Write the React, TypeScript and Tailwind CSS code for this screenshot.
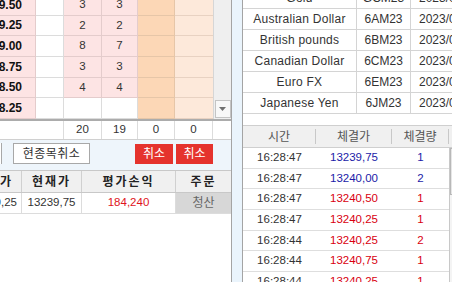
const book = [
  { price: '13239.50', a: '3', b: '3' },
  { price: '13239.25', a: '2', b: '2' },
  { price: '13239.00', a: '8', b: '7' },
  { price: '13238.75', a: '3', b: '3' },
  { price: '13238.50', a: '4', b: '4' },
  { price: '13238.25', a: '', b: '' },
];

const futures = [
  { name: 'Gold', code: 'GCM23' },
  { name: 'Australian Dollar', code: '6AM23' },
  { name: 'British pounds', code: '6BM23' },
  { name: 'Canadian Dollar', code: '6CM23' },
  { name: 'Euro FX', code: '6EM23' },
  { name: 'Japanese Yen', code: '6JM23' },
];

const trades = [
  { time: '16:28:47', price: '13239,75', qty: '1', up: false },
  { time: '16:28:47', price: '13240,00', qty: '2', up: false },
  { time: '16:28:47', price: '13240,50', qty: '1', up: true },
  { time: '16:28:47', price: '13240,25', qty: '1', up: true },
  { time: '16:28:44', price: '13240,25', qty: '2', up: true },
  { time: '16:28:44', price: '13240,75', qty: '1', up: true },
  { time: '16:28:44', price: '13240,25', qty: '1', up: true },
];

const OrderBook = () => (
  <div className="h-[140px] shrink-0 bg-white">
    <div className="flex h-[119px]">
      <div className="w-[213px] overflow-hidden">
        <div className="-mt-[5px]">
          {book.map((r, i) => {
            const filled = r.a !== '';
            return (
              <div key={i} className="flex h-[20.67px] text-[11.5px] text-[#333]">
                <div className="w-[36px] shrink-0 overflow-hidden bg-[#fde4e4] border-r border-b border-[#e4cccc] flex items-center justify-end pr-[13px] font-bold text-[12px] text-[#111] whitespace-nowrap">
                  {r.price}
                </div>
                <div className="w-[28px] shrink-0 bg-white border-r border-b border-[#dcdcdc]" />
                <div className={`w-[38px] shrink-0 border-r border-b flex items-center justify-center ${filled ? 'bg-[#fde4e4] border-[#e4cccc]' : 'bg-white border-[#dcdcdc]'}`}>
                  {r.a}
                </div>
                <div className={`w-[36px] shrink-0 border-r border-b flex items-center justify-center ${filled ? 'bg-[#fde4e4] border-[#e4cccc]' : 'bg-white border-[#dcdcdc]'}`}>
                  {r.b}
                </div>
                <div className="w-[37px] shrink-0 bg-[#fcd7b6] border-r border-b border-[#e6c6a8]" />
                <div className="w-[38px] shrink-0 bg-[#fde9da] border-b border-[#e8d2c2]" />
              </div>
            );
          })}
        </div>
      </div>
      <div className="w-[18px] bg-[#efefef] border-l border-[#d6d6d6] flex flex-col justify-end items-center pb-[1px]">
        <div className="w-[16px] h-[18px] bg-[#f8f8f8] border border-[#c4c4c4] flex items-center justify-center">
          <svg width="7" height="4" viewBox="0 0 7 4">
            <path d="M0 0h7L3.5 4z" fill="#707070" />
          </svg>
        </div>
      </div>
    </div>
    <div className="flex h-[21px] border-t-2 border-b border-t-[#acacac] border-b-[#d0d0d0] text-[11.5px] text-[#333]">
      <div className="w-[64px] border-r border-[#dcdcdc]" />
      <div className="w-[38px] border-r border-[#dcdcdc] flex items-center justify-center">20</div>
      <div className="w-[36px] border-r border-[#dcdcdc] flex items-center justify-center">19</div>
      <div className="w-[37px] border-r border-[#dcdcdc] flex items-center justify-center">0</div>
      <div className="w-[38px] border-r border-[#dcdcdc] flex items-center justify-center">0</div>
      <div className="flex-1" />
    </div>
  </div>
);

const ButtonBar = () => (
  <div className="h-[30px] shrink-0 bg-[#eef5fb] flex items-start pt-[3px] text-[12px]">
    <div className="w-[2px] h-[21px] border-r border-[#a8a8a8] bg-white" />
    <button className="ml-[11px] w-[77px] h-[21px] bg-white border border-[#a8a8a8] text-[#333] flex items-center justify-center tracking-[0.5px]">
      현종목취소
    </button>
    <button className="ml-[45px] mt-[1px] w-[38px] h-[20px] bg-[#e5332d] text-white flex items-center justify-center">
      취소
    </button>
    <button className="ml-[3px] mt-[1px] w-[37px] h-[20px] bg-[#e5332d] text-white flex items-center justify-center">
      취소
    </button>
  </div>
);

const Positions = () => (
  <div className="flex-1 bg-white border-t border-[#c8c8c8]">
    <div className="flex h-[22px] bg-[#f0f0f0] border-b border-[#c8c8c8] text-[12px] font-bold text-[#222] tracking-[2px]">
      <div className="w-[22px] border-r border-[#d0d0d0] flex items-center justify-end overflow-hidden whitespace-nowrap pr-[8px]">
        진입가
      </div>
      <div className="w-[60px] border-r border-[#d0d0d0] flex items-center justify-center">현재가</div>
      <div className="w-[94px] border-r border-[#d0d0d0] flex items-center justify-center">평가손익</div>
      <div className="flex-1 flex items-center justify-center">주문</div>
    </div>
    <div className="flex h-[21px] border-b border-[#dcdcdc] text-[11.5px] text-[#333]">
      <div className="w-[22px] border-r border-[#dcdcdc] flex items-center justify-end overflow-hidden whitespace-nowrap pr-[4px]">
        13240,25
      </div>
      <div className="w-[60px] border-r border-[#dcdcdc] flex items-center justify-center">13239,75</div>
      <div className="w-[94px] border-r border-[#dcdcdc] flex items-center justify-center text-[#e0141c]">184,240</div>
      <div className="flex-1 bg-[#d7d7d7] flex items-center justify-center text-[12px] text-[#666]">청산</div>
    </div>
  </div>
);

const Futures = () => (
  <div className="h-[114px] shrink-0 overflow-hidden">
    <div className="-mt-[12px]">
      {futures.map((f) => (
        <div key={f.code} className="flex h-[21px] border-b border-[#d4d4d4] text-[12px] text-[#333] whitespace-nowrap">
          <div className="w-[114px] shrink-0 border-r border-[#d4d4d4] flex items-center justify-center tracking-[0.25px]">
            {f.name}
          </div>
          <div className="w-[54px] shrink-0 border-r border-[#d4d4d4] flex items-center justify-center">{f.code}</div>
          <div className="w-[76px] shrink-0 flex items-center justify-center">2023/06/19</div>
        </div>
      ))}
    </div>
  </div>
);

const Trades = () => (
  <div className="mt-[11px] flex-1 flex flex-col">
    <div className="flex h-[23px] shrink-0 bg-[#f0f0f0] border-t border-b border-[#cfcfcf] text-[12px] text-[#555]">
      <div className="w-[73px] border-r border-[#c8c8c8] my-[3px] flex items-center justify-center">시간</div>
      <div className="w-[76px] border-r border-[#c8c8c8] my-[3px] flex items-center justify-center">체결가</div>
      <div className="w-[57px] border-r border-[#c8c8c8] my-[3px] flex items-center justify-center">체결량</div>
      <div className="flex-1" />
    </div>
    <div className="flex flex-1">
      <div className="w-[206px]">
        {trades.map((t, i) => (
          <div key={i} className="flex h-[20.67px] border-b border-[#dedede] text-[11.5px]">
            <div className="w-[73px] flex items-center justify-center text-[#333]">{t.time}</div>
            <div className={`w-[76px] flex items-center justify-center ${t.up ? 'text-[#d9000f]' : 'text-[#1b1ba8]'}`}>
              {t.price}
            </div>
            <div className={`w-[57px] flex items-center justify-center ${t.up ? 'text-[#d9000f]' : 'text-[#1b1ba8]'}`}>
              {t.qty}
            </div>
          </div>
        ))}
      </div>
      <div className="flex-1 border-l border-[#c8c8c8] bg-[#f4f4f4]">
        <div className="h-[47px] bg-[#e6e6e6] border-t border-b border-l border-[#b8b8b8]" />
      </div>
    </div>
  </div>
);

export default function App() {
  return (
    <div className="w-[452px] h-[282px] overflow-hidden flex bg-[#eaf4fc] font-['Liberation_Sans','Noto_Sans_CJK_KR',sans-serif] leading-none">
      <div className="w-[232px] shrink-0 flex flex-col border-r border-[#a4a4a4]">
        <OrderBook />
        <ButtonBar />
        <Positions />
      </div>
      <div className="w-[10px] shrink-0" />
      <div className="flex-1 flex flex-col bg-white border-l border-[#a4a4a4] overflow-hidden">
        <Futures />
        <Trades />
      </div>
    </div>
  );
}
